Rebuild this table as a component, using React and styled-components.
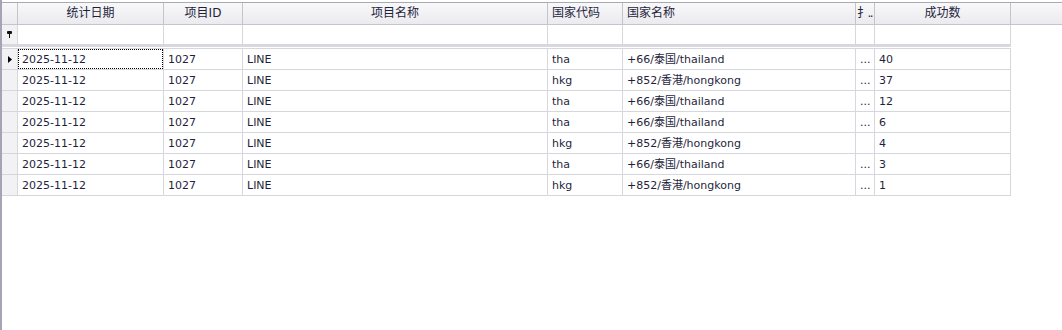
import React from "react";
import styled, { createGlobalStyle, css } from "styled-components";

const Palette = {
  text: "#1f1f3d",
  line: "#d6d6de",
  headLine: "#c4c4ce",
  frame: "#a4a4b4",
  indicator: "#f2f2f5",
};

const GlobalStyle = createGlobalStyle`
  html, body {
    margin: 0;
    padding: 0;
    background: #fff;
  }
  body {
    font-family: "DejaVu Sans", "Noto Sans CJK SC", sans-serif;
    font-size: 11px;
    color: ${Palette.text};
  }
`;

const COLS = "16px 146px 79px 305px 75px 233px 19px 136px";

const columns = [
  { title: "统计日期", align: "center", key: "date" },
  { title: "项目ID", align: "center", key: "pid" },
  { title: "项目名称", align: "center", key: "name" },
  { title: "国家代码", align: "left", key: "code" },
  { title: "国家名称", align: "left", key: "country" },
  { title: "扌..", align: "left", key: "op", narrow: true },
  { title: "成功数", align: "center", key: "count" },
];

const rows = [
  { code: "tha", country: "+66/泰国/thailand", op: "...", count: 40 },
  { code: "hkg", country: "+852/香港/hongkong", op: "...", count: 37 },
  { code: "tha", country: "+66/泰国/thailand", op: "...", count: 12 },
  { code: "tha", country: "+66/泰国/thailand", op: "...", count: 6 },
  { code: "hkg", country: "+852/香港/hongkong", op: "", count: 4 },
  { code: "tha", country: "+66/泰国/thailand", op: "...", count: 3 },
  { code: "hkg", country: "+852/香港/hongkong", op: "...", count: 1 },
];

const Page = styled.div`
  min-height: 100vh;
  border-left: 2px solid ${Palette.frame};
  box-sizing: border-box;
  padding-top: 2px;
`;

const HeaderBar = styled.div`
  display: flex;
  border-top: 1px solid #a9a9b0;
  border-bottom: 1px solid ${Palette.headLine};
  background: linear-gradient(#f8f8fa, #ebebef);
  height: 21px;
`;

const HeaderGrid = styled.div`
  display: grid;
  grid-template-columns: ${COLS};
`;

const HeadCell = styled.div`
  box-sizing: border-box;
  border-right: 1px solid ${Palette.headLine};
  font-size: 12px;
  line-height: 21px;
  padding: 0 ${(p) => (p.$narrow ? "0 0 1px" : "4px")};
  letter-spacing: ${(p) => (p.$narrow ? "-1.5px" : "normal")};
  text-align: ${(p) => p.$align || "left"};
  white-space: nowrap;
  overflow: hidden;
`;

const HeadFiller = styled.div`
  flex: 1;
`;

const FilterGrid = styled.div`
  display: grid;
  grid-template-columns: ${COLS};
  width: 1009px;
  height: 19px;
  border-bottom: 1px solid ${Palette.line};
`;

const Cell = styled.div`
  box-sizing: border-box;
  border-right: 1px solid ${Palette.line};
  padding: 0 4px;
  white-space: nowrap;
  overflow: hidden;
  position: relative;
  ${(p) =>
    p.$focus &&
    css`
      &::after {
        content: "";
        position: absolute;
        left: 0;
        top: 0;
        right: 0;
        bottom: 0;
        border: 1px dotted #000;
      }
    `}
`;

const IndicatorCell = styled.div`
  box-sizing: border-box;
  border-right: 1px solid ${Palette.line};
  background: ${Palette.indicator};
  display: flex;
  align-items: center;
  justify-content: center;
  svg {
    display: block;
  }
`;

const Separator = styled.div`
  width: 1009px;
  height: 2px;
  background: #d9d9e0;
  margin-bottom: 1px;
`;

const DataBlock = styled.div`
  width: 1009px;
  border-top: 1px solid ${Palette.line};
  border-bottom: 1px solid ${Palette.line};
`;

const DataRow = styled.div`
  display: grid;
  grid-template-columns: ${COLS};
  height: 20px;
  line-height: 21px;
  & + & {
    border-top: 1px solid ${Palette.line};
  }
`;

const RowArrow = () => (
  <svg width="4" height="7" viewBox="0 0 4 7">
    <path d="M0 0 L4 3.5 L0 7 Z" fill="#000" />
  </svg>
);

const FilterPin = () => (
  <svg width="5" height="7" viewBox="0 0 5 7">
    <rect x="0" y="0" width="5" height="3" rx="1" fill="#111" />
    <rect x="2" y="3" width="1" height="4" fill="#111" />
  </svg>
);

export default function App() {
  return (
    <>
      <GlobalStyle />
      <Page>
        <HeaderBar>
          <HeaderGrid>
            <HeadCell />
            {columns.map((c) => (
              <HeadCell key={c.key} $align={c.align} $narrow={c.narrow}>
                {c.title}
              </HeadCell>
            ))}
          </HeaderGrid>
          <HeadFiller />
        </HeaderBar>
        <FilterGrid>
          <IndicatorCell>
            <FilterPin />
          </IndicatorCell>
          {columns.map((c) => (
            <Cell key={c.key} />
          ))}
        </FilterGrid>
        <Separator />
        <DataBlock>
          {rows.map((r, i) => (
            <DataRow key={i}>
              <IndicatorCell>{i === 0 && <RowArrow />}</IndicatorCell>
              <Cell $focus={i === 0}>2025-11-12</Cell>
              <Cell>1027</Cell>
              <Cell>LINE</Cell>
              <Cell>{r.code}</Cell>
              <Cell>{r.country}</Cell>
              <Cell>{r.op}</Cell>
              <Cell>{r.count}</Cell>
            </DataRow>
          ))}
        </DataBlock>
      </Page>
    </>
  );
}
